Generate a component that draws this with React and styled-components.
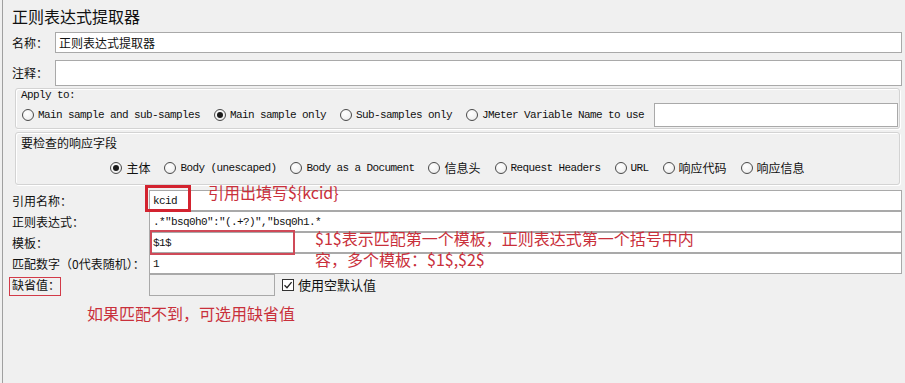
import React from 'react';
import styled, { createGlobalStyle } from 'styled-components';

const CJK = `"Noto Sans CJK SC", "Noto Sans", sans-serif`;
const MONO = `"Liberation Mono", "Noto Sans CJK SC", monospace`;

const GlobalStyle = createGlobalStyle`
  html, body {
    margin: 0;
    padding: 0;
    background: #f0f0f0;
  }
  body {
    font-family: ${CJK};
    color: #111;
  }
`;

const Page = styled.div`
  position: relative;
  height: 100vh;
  margin-left: 2px;
  border-left: 1px solid #a0a0a0;
  box-sizing: border-box;
  padding: 0 3px 0 9px;
  overflow: hidden;
`;

const Title = styled.div`
  padding-top: 6px;
  font-size: 16px;
  line-height: 20px;
  height: 20px;
`;

const Row = styled.div`
  display: flex;
  align-items: center;
  margin-top: ${p => p.$top || 0}px;
`;

const Label = styled.div`
  flex: 0 0 ${p => p.$width}px;
  font-size: 12px;
  line-height: 14px;
  white-space: nowrap;
`;

const Field = styled.input`
  flex: ${p => (p.$width ? `0 0 ${p.$width}px` : '1')};
  min-width: 0;
  height: ${p => p.$height}px;
  box-sizing: border-box;
  margin: 0;
  padding: 0 3px;
  border: 1px solid #a9a9a9;
  border-radius: 0;
  background: ${p => (p.$disabled ? '#f0f0f0' : '#fff')};
  font-family: ${p => (p.$mono ? MONO : CJK)};
  font-size: ${p => (p.$mono ? 11 : 12)}px;
  letter-spacing: ${p => (p.$mono ? '-0.6px' : '0')};
  color: #111;
  outline: none;
`;

const Group = styled.div`
  margin: ${p => p.$top}px 2px 0 3px;
  border: 1px solid #d3d3d3;
  border-radius: 3px;
  box-shadow: inset 1px 1px 0 #fff, 1px 1px 0 #fff;
  padding: ${p => p.$pad};
`;

const GroupTitle = styled.div`
  padding-left: 5px;
  font-family: ${p => (p.$mono ? MONO : CJK)};
  font-size: ${p => (p.$mono ? 11 : 12)}px;
  letter-spacing: ${p => (p.$mono ? '-0.6px' : '0')};
  line-height: ${p => p.$line}px;
  height: ${p => p.$line}px;
`;

const OptionRow = styled.div`
  display: flex;
  align-items: center;
  gap: 14px;
  height: ${p => p.$height}px;
  margin-top: ${p => p.$top}px;
  padding: ${p => p.$pad || 0};
  justify-content: ${p => p.$justify || 'flex-start'};
`;

const Option = styled.label`
  display: flex;
  align-items: center;
  gap: 4px;
  white-space: nowrap;
  font-family: ${p => (p.$mono ? MONO : CJK)};
  font-size: ${p => (p.$mono ? 11 : 12)}px;
  letter-spacing: ${p => (p.$mono ? '-0.6px' : '0')};
  line-height: 14px;
`;

const RadioDot = styled.span`
  flex: 0 0 auto;
  position: relative;
  width: 12px;
  height: 12px;
  box-sizing: border-box;
  border-radius: 50%;
  border: 1px solid #4a4a4a;
  background: radial-gradient(circle at 40% 35%, #ffffff 0%, #f2f2f2 60%, #dcdcdc 100%);

  &::after {
    content: '';
    display: ${p => (p.$on ? 'block' : 'none')};
    position: absolute;
    left: 2px;
    top: 2px;
    width: 6px;
    height: 6px;
    border-radius: 50%;
    background: #1a1a1a;
  }
`;

const VarField = styled(Field)`
  margin-left: -4px;
`;

const Section = styled.div`
  margin-top: 5px;
`;

const Box = styled.span`
  flex: 0 0 auto;
  display: flex;
  align-items: center;
  justify-content: center;
  width: 12px;
  height: 12px;
  box-sizing: border-box;
  border: 1px solid #333;
  background: #fff;
  margin-left: 7px;
`;

const CheckText = styled.span`
  margin-left: 4px;
  font-size: 13px;
  line-height: 16px;
`;

const Mark = styled.div`
  position: absolute;
  left: ${p => p.$x}px;
  top: ${p => p.$y}px;
  width: ${p => p.$w}px;
  height: ${p => p.$h}px;
  box-sizing: border-box;
  border: ${p => p.$b}px solid ${p => p.$color || '#d3232f'};
  pointer-events: none;
`;

const Note = styled.div`
  position: absolute;
  left: ${p => p.$x}px;
  top: ${p => p.$y}px;
  font-family: ${CJK};
  font-size: 16px;
  line-height: ${p => p.$line || 18}px;
  color: #c9303b;
  white-space: nowrap;
  pointer-events: none;
`;

const Radio = ({ on, mono, children }) => (
  <Option $mono={mono}>
    <RadioDot $on={on} />
    <span>{children}</span>
  </Option>
);

const CheckMark = () => (
  <svg width="10" height="10" viewBox="0 0 10 10">
    <path d="M1.5 5.2 L4 7.7 L8.6 2.2" fill="none" stroke="#222" strokeWidth="1.3" />
  </svg>
);

const fields = [
  { label: '引用名称：', value: 'kcid' },
  { label: '正则表达式：', value: '.*"bsq0h0":"(.+?)","bsq0h1.*' },
  { label: '模板：', value: '$1$' },
  { label: '匹配数字（0代表随机）：', value: '1' },
];

const App = () => {
  return (
    <>
      <GlobalStyle />
      <Page>
        <Title>正则表达式提取器</Title>

        <Row $top={6}>
          <Label $width={43}>名称：</Label>
          <Field $height={21} value="正则表达式提取器" readOnly />
        </Row>
        <Row $top={7}>
          <Label $width={43}>注释：</Label>
          <Field $height={26} value="" readOnly />
        </Row>

        <Group $top={2} $pad="0 0 1px 0">
          <GroupTitle $mono $line={12}>Apply to:</GroupTitle>
          <OptionRow $top={2} $height={24} $pad="0 1px 0 6px">
            <Radio mono>Main sample and sub-samples</Radio>
            <Radio mono on>Main sample only</Radio>
            <Radio mono>Sub-samples only</Radio>
            <Radio mono>JMeter Variable Name to use</Radio>
            <VarField $height={24} value="" readOnly />
          </OptionRow>
        </Group>

        <Group $top={3} $pad="3px 0 6px 0">
          <GroupTitle $line={14}>要检查的响应字段</GroupTitle>
          <OptionRow $top={8} $height={20} $justify="center">
            <Radio on>主体</Radio>
            <Radio mono>Body (unescaped)</Radio>
            <Radio mono>Body as a Document</Radio>
            <Radio>信息头</Radio>
            <Radio mono>Request Headers</Radio>
            <Radio mono>URL</Radio>
            <Radio>响应代码</Radio>
            <Radio>响应信息</Radio>
          </OptionRow>
        </Group>

        <Section>
          {fields.map(f => (
            <Row key={f.label}>
              <Label $width={137}>{f.label}</Label>
              <Field $height={21} $mono value={f.value} readOnly />
            </Row>
          ))}
          <Row>
            <Label $width={137}>缺省值：</Label>
            <Field $height={22} $width={126} $disabled value="" readOnly />
            <Box>
              <CheckMark />
            </Box>
            <CheckText>使用空默认值</CheckText>
          </Row>
        </Section>

        <Mark $x={142} $y={185} $w={46} $h={27} $b={3} />
        <Note $x={205} $y={183}>引用出填写${'{kcid}'}</Note>

        <Mark $x={147} $y={230} $w={145} $h={25} $b={2} $color="#cf4a58" />
        <Note $x={312} $y={228} $line={21}>
          $1$表示匹配第一个模板，正则表达式第一个括号中内
          <br />
          容，多个模板：$1$,$2$
        </Note>

        <Mark $x={6} $y={277} $w={52} $h={19} $b={1} $color="#d23a48" />
        <Note $x={84} $y={303} $line={20}>如果匹配不到，可选用缺省值</Note>
      </Page>
    </>
  );
};

export default App;
